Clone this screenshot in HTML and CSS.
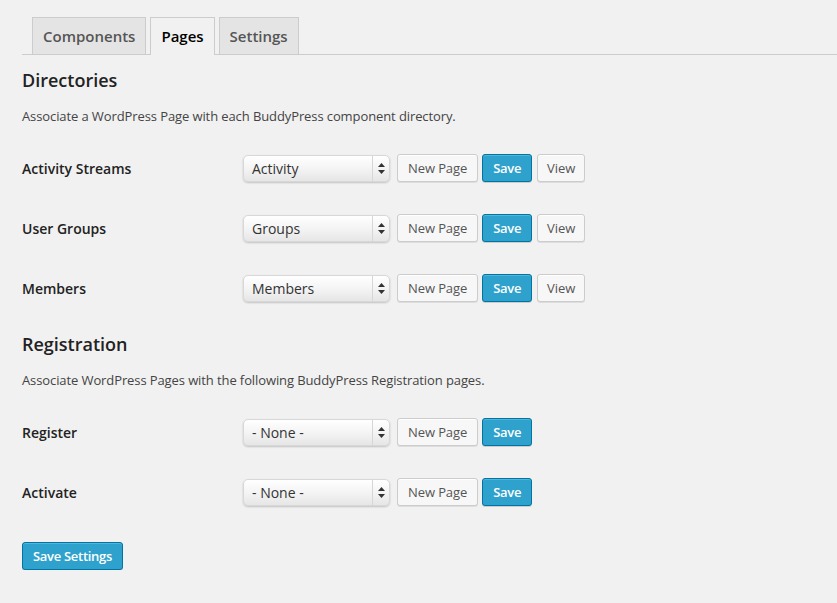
FILE: index.html
```html
<!DOCTYPE html>
<html>
<head>
<meta charset="utf-8">
<link rel="stylesheet" href="styles.css">
</head>
<body>
<div class="wrap">
  <nav class="tabs">
    <a class="tab">Components</a>
    <a class="tab active">Pages</a>
    <a class="tab">Settings</a>
  </nav>

  <h2 class="section-title">Directories</h2>
  <p class="desc">Associate a WordPress Page with each BuddyPress component directory.</p>
  <div class="rows">
    <div class="row">
      <div class="label">Activity Streams</div>
      <div class="controls">
        <div class="select"><span class="select-value">Activity</span><span class="select-arrow"><svg width="7" height="11" viewBox="0 0 7 11"><path d="M3.5 0L7 4H0z M3.5 11L0 7h7z" fill="#333"/></svg></span></div>
        <button class="btn">New Page</button>
        <button class="btn primary">Save</button>
        <button class="btn view">View</button>
      </div>
    </div>
    <div class="row">
      <div class="label">User Groups</div>
      <div class="controls">
        <div class="select"><span class="select-value">Groups</span><span class="select-arrow"><svg width="7" height="11" viewBox="0 0 7 11"><path d="M3.5 0L7 4H0z M3.5 11L0 7h7z" fill="#333"/></svg></span></div>
        <button class="btn">New Page</button>
        <button class="btn primary">Save</button>
        <button class="btn view">View</button>
      </div>
    </div>
    <div class="row">
      <div class="label">Members</div>
      <div class="controls">
        <div class="select"><span class="select-value">Members</span><span class="select-arrow"><svg width="7" height="11" viewBox="0 0 7 11"><path d="M3.5 0L7 4H0z M3.5 11L0 7h7z" fill="#333"/></svg></span></div>
        <button class="btn">New Page</button>
        <button class="btn primary">Save</button>
        <button class="btn view">View</button>
      </div>
    </div>
  </div>

  <h2 class="section-title second">Registration</h2>
  <p class="desc">Associate WordPress Pages with the following BuddyPress Registration pages.</p>
  <div class="rows">
    <div class="row">
      <div class="label">Register</div>
      <div class="controls">
        <div class="select"><span class="select-value">- None -</span><span class="select-arrow"><svg width="7" height="11" viewBox="0 0 7 11"><path d="M3.5 0L7 4H0z M3.5 11L0 7h7z" fill="#333"/></svg></span></div>
        <button class="btn">New Page</button>
        <button class="btn primary">Save</button>
      </div>
    </div>
    <div class="row">
      <div class="label">Activate</div>
      <div class="controls">
        <div class="select"><span class="select-value">- None -</span><span class="select-arrow"><svg width="7" height="11" viewBox="0 0 7 11"><path d="M3.5 0L7 4H0z M3.5 11L0 7h7z" fill="#333"/></svg></span></div>
        <button class="btn">New Page</button>
        <button class="btn primary">Save</button>
      </div>
    </div>
  </div>

  <div class="submit">
    <button class="btn primary big">Save Settings</button>
  </div>
</div>
</body>
</html>
```

FILE: styles.css
```css
html, body {
  margin: 0;
  padding: 0;
  background: #f1f1f1;
}
body {
  font-family: "Open Sans", "Liberation Sans", sans-serif;
  font-size: 13px;
  color: #444;
}
.wrap {
  padding: 17px 0 0 22px;
}
.tabs {
  display: flex;
  align-items: flex-end;
  gap: 4px;
  padding-left: 10px;
  border-bottom: 1px solid #ccc;
}
.tab {
  display: block;
  border: 1px solid #ccc;
  border-bottom: 0;
  background: #e4e4e4;
  color: #555;
  font-size: 15px;
  font-weight: 600;
  line-height: 24px;
  padding: 6px 10px;
}
.tab.active {
  background: #f1f1f1;
  color: #000;
  margin-bottom: -1px;
  padding-bottom: 7px;
}
.section-title {
  margin: 13px 0 0;
  font-size: 18px;
  font-weight: 600;
  line-height: 24px;
  color: #222;
}
.section-title.second {
  margin-top: 14px;
}
.desc {
  margin: 14px 0 0;
  line-height: 20px;
  font-size: 13px;
  letter-spacing: -0.1px;
  color: #444;
}
.rows {
  margin-top: 12px;
}
.row {
  display: flex;
  align-items: center;
  height: 60px;
}
.label {
  width: 221px;
  font-size: 14px;
  font-weight: 600;
  color: #222;
}
.controls {
  display: flex;
  align-items: center;
  gap: 4px;
}
.select {
  box-sizing: border-box;
  width: 147px;
  height: 27px;
  margin-right: 3px;
  margin-top: 1px;
  display: flex;
  align-items: stretch;
  border-radius: 5px;
  background: linear-gradient(#ffffff, #f4f4f4 50%, #e6e6e6);
  border: 1px solid #d8d8d8;
  box-shadow: 0 1px 2px rgba(0,0,0,0.2);
}
.select-value {
  flex: 1;
  padding-left: 8px;
  font-size: 14px;
  line-height: 25px;
  color: #333;
}
.select-arrow {
  width: 16px;
  border-left: 1px solid #d6d6d6;
  display: flex;
  align-items: center;
  justify-content: center;
}
.btn {
  box-sizing: border-box;
  height: 28px;
  padding: 0 10px;
  font-family: "Open Sans", "Liberation Sans", sans-serif;
  font-size: 13px;
  line-height: 26px;
  letter-spacing: -0.1px;
  color: #555;
  background: #f7f7f7;
  border: 1px solid #ccc;
  border-radius: 3px;
  box-shadow: inset 0 1px 0 #fff, 0 1px 0 rgba(0,0,0,0.08);
  cursor: pointer;
}
.btn.primary {
  background: #2ea2cc;
  border-color: #0074a2;
  color: #fff;
  font-weight: 600;
  letter-spacing: -0.3px;
  box-shadow: inset 0 1px 0 rgba(120,200,230,0.5), 0 1px 0 rgba(0,0,0,0.15);
}
.btn.view {
  margin-left: 1px;
  padding: 0 9px;
}
.submit {
  margin-top: 20px;
}
.btn.big {
  padding: 0 10px;
}
```
